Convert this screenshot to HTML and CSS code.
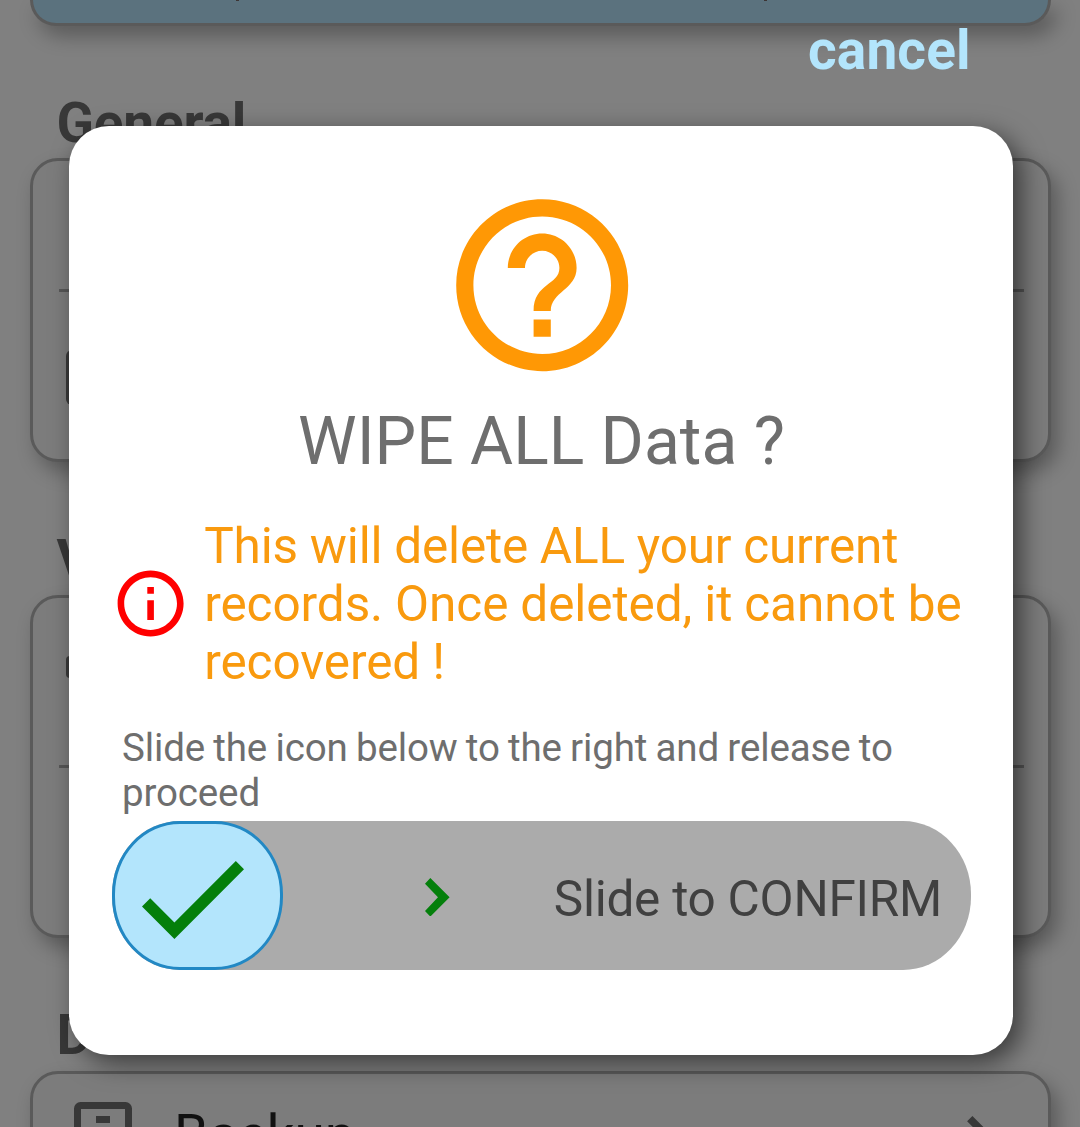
FILE: index.html
```html
<!DOCTYPE html>
<html lang="en">
<head>
<meta charset="utf-8">
<title>Wipe all data</title>
<link rel="stylesheet" href="styles.css">
</head>
<body>
<main class="settings">
  <div class="card card-top"><i class="tail"></i><i class="tail"></i></div>
  <h2 class="heading">General</h2>
  <section class="card card-general">
    <hr class="divider">
    <span class="tile"></span>
  </section>
  <h2 class="heading">V</h2>
  <section class="card card-view">
    <span class="tile tile-small"></span>
    <hr class="divider">
  </section>
  <h2 class="heading">D</h2>
  <section class="card card-data">
    <svg class="save-icon" viewBox="0 0 58 58"><rect x="3.5" y="3.5" width="51" height="51" rx="3" fill="none" stroke="#383838" stroke-width="7"/><path d="M22 14h14v7H22z" fill="#383838"/></svg>
    <span class="row-label">Backup</span>
    <svg class="row-arrow" viewBox="8.59 6 7.41 12"><path d="M10 6L8.59 7.41 13.17 12l-4.58 4.59L10 18l6-6z" fill="#383838"/></svg>
  </section>
</main>
<button class="cancel">cancel</button>
<div class="dialog" role="dialog">
  <svg class="help-icon" viewBox="0 0 24 24"><path fill="#ff9805" d="M11 18h2v-2h-2v2zm1-16C6.48 2 2 6.48 2 12s4.48 10 10 10 10-4.48 10-10S17.52 2 12 2zm0 18c-4.41 0-8-3.59-8-8s3.59-8 8-8 8 3.59 8 8-3.59 8-8 8zm0-14c-2.21 0-4 1.79-4 4h2c0-1.1.9-2 2-2s2 .9 2 2c0 2-3 1.75-3 5h2c0-2.25 3-2.5 3-5 0-2.21-1.79-4-4-4z"/></svg>
  <h1 class="title">WIPE ALL Data ?</h1>
  <div class="warning">
    <svg class="info-icon" viewBox="0 0 24 24"><path fill="#f00" d="M11 7h2v2h-2zm0 4h2v6h-2zm1-9C6.48 2 2 6.48 2 12s4.48 10 10 10 10-4.48 10-10S17.52 2 12 2zm0 18c-4.41 0-8-3.59-8-8s3.59-8 8-8 8 3.59 8 8-3.59 8-8 8z"/></svg>
    <p class="warning-text">This will delete ALL your current<br><span class="wide">records. Once deleted, it cannot be</span><br><span class="wide">recovered !</span></p>
  </div>
  <p class="hint">Slide the icon below to the right and release to<br>proceed</p>
  <div class="slider">
    <div class="thumb"><svg class="check" viewBox="3.41 5.59 17.59 13.41"><path fill="#047f0b" d="M9 16.17L4.83 12l-1.42 1.41L9 19 21 7l-1.41-1.41z"/></svg></div>
    <svg class="chevron" viewBox="0 0 74 116"><path d="M16 0L0 17l39 41L0 99l16 17 58-58z" fill="#047f0b"/></svg>
    <span class="slider-label">Slide to CONFIRM</span>
  </div>
</div>
</body>
</html>
```
FILE: styles.css
```css
* { box-sizing: border-box; }
body {
  margin: 0;
  height: 1127px;
  position: relative;
  overflow: hidden;
  background: #808080;
  font-family: Roboto, "Liberation Sans", sans-serif;
}
h1, h2, p, hr { margin: 0; }
svg { display: block; flex: none; }

.settings { padding: 0 29px 0 30px; height: 1127px; overflow: hidden; }
.card {
  border: 3px solid #5a5a5a;
  border-radius: 28px;
  background: #7c7c7c;
  box-shadow: 7px 10px 20px rgba(0, 0, 0, .3);
}
.card-top {
  height: 26px;
  display: flex;
  justify-content: space-between;
  padding: 0 281px 0 203px;
  border-top: 0;
  border-radius: 0 0 28px 28px;
  background: #5b727e;
}
.tail { width: 3px; height: 1px; background: #3c3535; }
.heading {
  margin: 65px 0 3px;
  padding-left: 26.5px;
  font-size: 55px;
  line-height: 64px;
  font-weight: 700;
  letter-spacing: -.2px;
  color: #383838;
}
.card-general { height: 304px; padding: 128px 24px 0 26px; }
.card-view { height: 343px; padding: 58px 24px 0 26px; }
.divider { border: 0; height: 3px; background: #575757; }
.tile {
  display: block;
  width: 60px;
  height: 55px;
  margin: 58px 0 0 7px;
  border-radius: 6px;
  background: #383838;
}
.tile-small { height: 22px; margin: 0 0 87px 7px; border-radius: 4px; }
.card-general + .heading { margin-top: 66px; }
.card-view + .heading { margin: 65px 0 4px; }
.card-data {
  height: 300px;
  display: flex;
  align-items: flex-start;
  padding: 28px 53px 0 41px;
}
.save-icon { width: 58px; height: 58px; }
.row-label { flex: 1; margin: 1px 0 0 42px; font-size: 55px; line-height: 64px; letter-spacing: -.1px; color: #111; }
.row-arrow { width: 28px; height: 45px; margin-top: 14px; }

.cancel {
  position: absolute;
  left: 808px;
  top: 18px;
  padding: 0;
  border: 0;
  background: none;
  font: 700 55px/64px Roboto, "Liberation Sans", sans-serif;
  letter-spacing: .15px;
  color: #b3e5fc;
}
.dialog {
  position: absolute;
  left: 69px;
  top: 126px;
  width: 944px;
  height: 929px;
  padding: 55.8px 42px 0 43px;
  border-radius: 40px;
  background: #fff;
  box-shadow: 8px 8px 26px rgba(0, 0, 0, .55);
}
.help-icon { width: 206.4px; height: 206.4px; margin: 0 auto 0 326.8px; }
.title {
  margin-top: 15.3px;
  font-size: 66px;
  line-height: 78px;
  font-weight: 400;
  text-align: center;
  color: #6e6e6e;
}
.warning { display: flex; margin-top: 36px; }
.info-icon { width: 79.2px; height: 79.2px; margin: 46.4px 0 0 -1px; }
.warning-text {
  margin-left: 14px;
  font-size: 49.5px;
  line-height: 58px;
  letter-spacing: -.15px;
  word-spacing: -.4px;
  white-space: nowrap;
  color: #f99a0e;
}
.wide { letter-spacing: -.08px; word-spacing: -.2px; }
.hint {
  margin: 33.5px 0 0 10px;
  font-size: 38.5px;
  line-height: 45px;
  letter-spacing: -.14px;
  word-spacing: -1.1px;
  white-space: nowrap;
  color: #6e6e6e;
}
.slider {
  display: flex;
  align-items: center;
  height: 149px;
  margin-top: 6.5px;
  padding-right: 29px;
  border-radius: 68px / 73px;
  background: #ababab;
}
.thumb {
  width: 170.5px;
  height: 149px;
  padding: 37px 0 0 26.8px;
  border: 3px solid #2288c4;
  border-radius: 68px / 73px;
  background: #b3e5fc;
}
.check { width: 102px; height: 78px; }
.chevron { width: 24.6px; height: 38.6px; margin: 2px 0 0 142.6px; }
.slider-label {
  margin: 6px 0 0 auto;
  font-size: 49.5px;
  line-height: 58px;
  letter-spacing: -.25px;
  color: #404040;
}
```
